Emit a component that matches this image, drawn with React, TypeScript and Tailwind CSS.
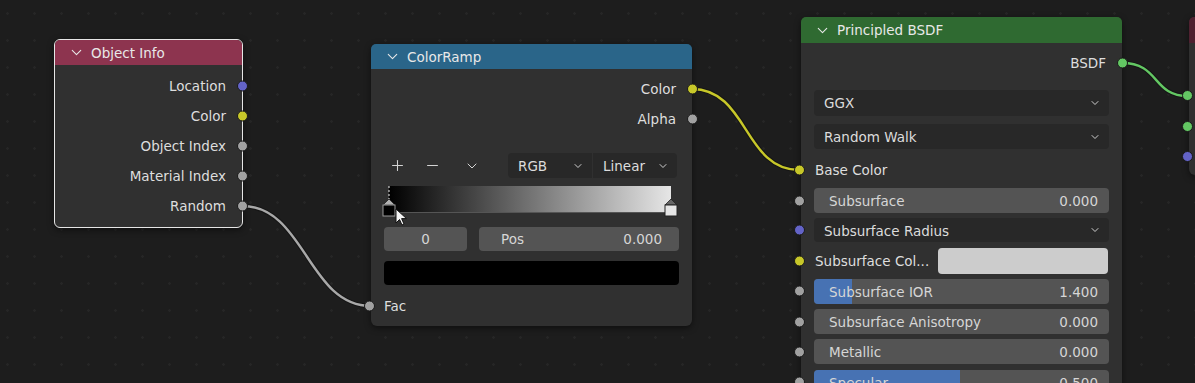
import React from 'react';
import { ChevronDown, Plus, Minus } from 'lucide-react';

const SOCKET = {
  gray: 'bg-[#a1a1a1]',
  yellow: 'bg-[#c7c729]',
  purple: 'bg-[#6363c7]',
  green: 'bg-[#63c763]',
};

type SocketColor = keyof typeof SOCKET;

const Socket: React.FC<{ color: SocketColor; side: 'left' | 'right' }> = ({ color, side }) => (
  <span
    className={`absolute top-1/2 -translate-y-1/2 w-[11px] h-[11px] rounded-full border border-[#1a1a1a] ${SOCKET[color]} ${
      side === 'right' ? 'right-[-6px]' : 'left-[-7px]'
    }`}
  />
);

const Header: React.FC<{ title: string; bg: string; h: string }> = ({ title, bg, h }) => (
  <div className={`flex items-center gap-[6px] pl-[13px] ${bg} ${h} rounded-t-[5px] text-[#e8e8e8]`}>
    <ChevronDown size={17} strokeWidth={1.5} />
    <span className="translate-y-[1px]">{title}</span>
  </div>
);

const OutRow: React.FC<{ label: string; color: SocketColor }> = ({ label, color }) => (
  <div className="relative h-[30px] flex items-center justify-end pr-[16px]">
    <span className="translate-y-[1px]">{label}</span>
    <Socket color={color} side="right" />
  </div>
);

const NumField: React.FC<{ label: string; value: string; color: SocketColor; fill?: number }> = ({
  label,
  value,
  color,
  fill,
}) => (
  <div className="relative h-[25px]">
    <Socket color={color} side="left" />
    <div className="relative mx-[13px] h-full rounded-[4px] bg-[#545454] overflow-hidden flex items-center justify-between pl-[15px] pr-[11px] text-[#d6d6d6]">
      {fill !== undefined && (
        <div className="absolute left-0 top-0 bottom-0 bg-[#4772b3]" style={{ width: `${fill}%` }} />
      )}
      <span className="relative translate-y-[1px]">{label}</span>
      <span className="relative translate-y-[1px]">{value}</span>
    </div>
  </div>
);

const Dropdown: React.FC<{ label: string; className?: string }> = ({ label, className }) => (
  <div
    className={`h-full rounded-[4px] bg-[#282828] flex items-center justify-between pl-[10px] pr-[8px] text-[#dcdcdc] ${className ?? ''}`}
  >
    <span className="translate-y-[1px]">{label}</span>
    <ChevronDown size={12} strokeWidth={2} className="text-[#cfcfcf]" />
  </div>
);

const Wires: React.FC = () => (
  <svg className="absolute inset-0" width={1195} height={383}>
    <g fill="none" strokeLinecap="round">
      <path d="M242 206 C 305 206, 308 306, 371 306" stroke="#151515" strokeWidth={4.5} />
      <path d="M242 206 C 305 206, 308 306, 371 306" stroke="#a8a8a8" strokeWidth={2.4} />
      <path d="M692 89 C 748 89, 744 170, 799 170" stroke="#151515" strokeWidth={4.5} />
      <path d="M692 89 C 748 89, 744 170, 799 170" stroke="#c7c729" strokeWidth={2.4} />
      <path d="M1122 63 C 1160 63, 1152 96, 1188 96" stroke="#151515" strokeWidth={4.5} />
      <path d="M1122 63 C 1160 63, 1152 96, 1188 96" stroke="#63c763" strokeWidth={2.4} />
    </g>
  </svg>
);

const ObjectInfo: React.FC = () => (
  <div className="absolute left-[54px] top-[39px] w-[189px] h-[189px] rounded-[6px] bg-[#303030] border border-[#e6e6e6] shadow-[0_2px_6px_rgba(0,0,0,0.5)]">
    <Header title="Object Info" bg="bg-[#8d344f]" h="h-[25px]" />
    <div className="pt-[6px] text-[#dedede]">
      <OutRow label="Location" color="purple" />
      <OutRow label="Color" color="yellow" />
      <OutRow label="Object Index" color="gray" />
      <OutRow label="Material Index" color="gray" />
      <OutRow label="Random" color="gray" />
    </div>
  </div>
);

const ColorRamp: React.FC = () => (
  <div className="absolute left-[371px] top-[44px] w-[321px] h-[282px] rounded-[6px] bg-[#303030] shadow-[0_2px_6px_rgba(0,0,0,0.5)]">
    <Header title="ColorRamp" bg="bg-[#2a6589]" h="h-[25px]" />
    <div className="pt-[5px] text-[#dedede]">
      <OutRow label="Color" color="yellow" />
      <OutRow label="Alpha" color="gray" />

      <div className="mt-[19px] h-[25px] flex items-center pl-[18px] pr-[15px]">
        <Plus size={17} strokeWidth={1.5} className="text-[#d4d4d4]" />
        <Minus size={17} strokeWidth={1.5} className="ml-[18px] text-[#d4d4d4]" />
        <ChevronDown size={16} strokeWidth={1.5} className="ml-[23px] text-[#d4d4d4]" />
        <div className="ml-auto flex h-full w-[169px] gap-px">
          <Dropdown label="RGB" className="flex-1 rounded-r-none" />
          <Dropdown label="Linear" className="flex-1 rounded-l-none" />
        </div>
      </div>

      <div className="relative mt-[8px] ml-[18px] w-[282px] h-[28px]">
        <div className="absolute inset-x-0 top-0 h-[27px] bg-[linear-gradient(to_right,#000000,#e6e6e6)] border-b border-[#555]" />
        <svg className="absolute left-[-7px] top-0 overflow-visible" width={14} height={32}>
          <line x1={7} y1={0} x2={7} y2={13} stroke="#f0f0f0" strokeWidth={1} strokeDasharray="2 2" />
          <path d="M1 19 L7 13 L13 19 Z" fill="#b0b0b0" stroke="#222" strokeWidth={0.8} />
          <rect x={1} y={19} width={12} height={11} fill="#000" stroke="#999" strokeWidth={1} />
        </svg>
        <svg className="absolute right-[-7px] top-0 overflow-visible" width={14} height={32}>
          <path d="M1 19 L7 13 L13 19 Z" fill="#666" stroke="#222" strokeWidth={0.8} />
          <rect x={1} y={19} width={12} height={11} fill="#e6e6e6" stroke="#222" strokeWidth={1} />
        </svg>
      </div>

      <div className="mt-[13px] flex h-[24px] px-[13px] gap-[12px] text-[#d6d6d6]">
        <div className="w-[83px] rounded-[4px] bg-[#545454] flex items-center justify-center">
          <span className="translate-y-[1px]">0</span>
        </div>
        <div className="flex-1 rounded-[4px] bg-[#545454] flex items-center justify-between pl-[22px] pr-[17px]">
          <span className="translate-y-[1px]">Pos</span>
          <span className="translate-y-[1px]">0.000</span>
        </div>
      </div>

      <div className="mt-[10px] mx-[13px] h-[24px] rounded-[4px] bg-black" />

      <div className="relative mt-[6px] h-[30px] flex items-center pl-[13px]">
        <Socket color="gray" side="left" />
        <span className="translate-y-[1px]">Fac</span>
      </div>
    </div>
  </div>
);

const Principled: React.FC = () => (
  <div className="absolute left-[801px] top-[17px] w-[321px] h-[420px] rounded-[6px] bg-[#303030] shadow-[0_2px_6px_rgba(0,0,0,0.5)]">
    <Header title="Principled BSDF" bg="bg-[#2f6a31]" h="h-[26px]" />
    <div className="pt-[5px] text-[#dedede]">
      <OutRow label="BSDF" color="green" />
      <div className="mt-[12px] flex flex-col gap-[8px] px-[13px]">
        <div className="h-[26px]">
          <Dropdown label="GGX" />
        </div>
        <div className="h-[25px]">
          <Dropdown label="Random Walk" />
        </div>
      </div>
      <div className="relative mt-[6px] h-[30px] flex items-center pl-[14px]">
        <Socket color="yellow" side="left" />
        <span className="translate-y-[1px]">Base Color</span>
      </div>
      <div className="mt-[3px] flex flex-col gap-[5.3px]">
        <NumField label="Subsurface" value="0.000" color="gray" />
        <div className="relative h-[24px]">
          <Socket color="purple" side="left" />
          <div className="mx-[13px] h-full">
            <Dropdown label="Subsurface Radius" />
          </div>
        </div>
        <div className="relative h-[26px] flex items-center pl-[14px] pr-[14px]">
          <Socket color="yellow" side="left" />
          <span className="w-[123px] translate-y-[1px]">Subsurface Col...</span>
          <div className="flex-1 h-full rounded-[4px] bg-[#cccccc]" />
        </div>
        <NumField label="Subsurface IOR" value="1.400" color="gray" fill={13} />
        <NumField label="Subsurface Anisotropy" value="0.000" color="gray" />
        <NumField label="Metallic" value="0.000" color="gray" />
        <NumField label="Specular" value="0.500" color="gray" fill={49.5} />
      </div>
    </div>
  </div>
);

const PartialNode: React.FC = () => (
  <div className="absolute left-[1189px] top-[17px] w-[120px] h-[158px] rounded-[6px] bg-[#303030] shadow-[0_2px_6px_rgba(0,0,0,0.5)]">
    <div className="h-[26px] rounded-t-[5px] bg-[#4f2130]" />
    <div className="relative h-[132px]">
      <span className="absolute left-[-7px] top-[47px] w-[11px] h-[11px] rounded-full border border-[#1a1a1a] bg-[#63c763]" />
      <span className="absolute left-[-7px] top-[78px] w-[11px] h-[11px] rounded-full border border-[#1a1a1a] bg-[#63c763]" />
      <span className="absolute left-[-7px] top-[108px] w-[11px] h-[11px] rounded-full border border-[#1a1a1a] bg-[#6363c7]" />
    </div>
  </div>
);

const Cursor: React.FC = () => (
  <svg className="absolute left-[395px] top-[208px]" width={14} height={20}>
    <path d="M1 1 L1 15 L4.5 11.5 L7 17 L9 16 L6.6 10.6 L11.5 10.6 Z" fill="#f4f4f4" stroke="#111" strokeWidth={1} strokeLinejoin="round" />
  </svg>
);

export default function App() {
  return (
    <div
      className="relative w-[1195px] h-[383px] overflow-hidden bg-[#1d1d1d] bg-[radial-gradient(circle,#262626_1px,transparent_1.6px)] bg-[size:27px_27px] bg-[position:-6px_0px] text-[13.5px] leading-none"
      style={{ fontFamily: '"DejaVu Sans", "Liberation Sans", sans-serif' }}
    >
      <Wires />
      <ObjectInfo />
      <ColorRamp />
      <Principled />
      <PartialNode />
      <Cursor />
    </div>
  );
}
